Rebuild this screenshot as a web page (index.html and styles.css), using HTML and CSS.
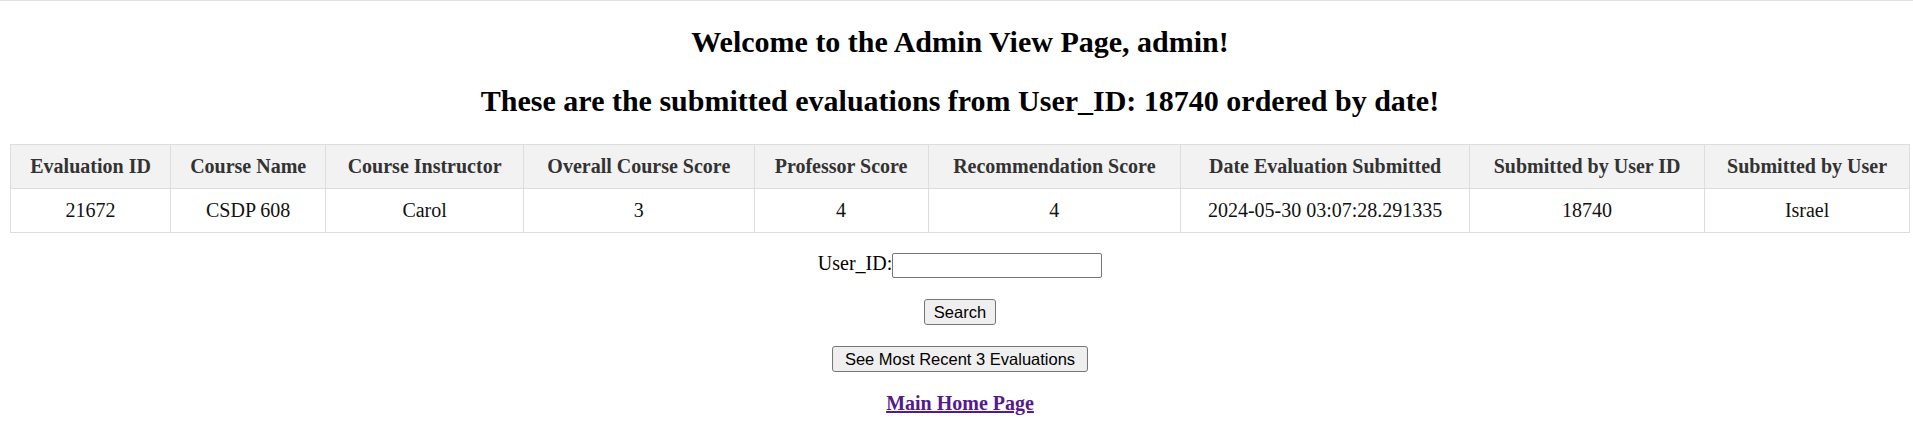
FILE: index.html
```html
<!DOCTYPE html>
<html lang="en">
<head>
<meta charset="utf-8">
<title>Admin View Page</title>
<link rel="stylesheet" href="styles.css">
</head>
<body>
<div class="page">
  <h2 class="title">Welcome to the Admin View Page, admin!</h2>
  <h2 class="title">These are the submitted evaluations from User_ID: 18740 ordered by date!</h2>
  <table class="evals">
    <thead>
      <tr>
        <th>Evaluation ID</th>
        <th>Course Name</th>
        <th>Course Instructor</th>
        <th>Overall Course Score</th>
        <th>Professor Score</th>
        <th>Recommendation Score</th>
        <th>Date Evaluation Submitted</th>
        <th>Submitted by User ID</th>
        <th>Submitted by User</th>
      </tr>
    </thead>
    <tbody>
      <tr>
        <td>21672</td>
        <td>CSDP 608</td>
        <td>Carol</td>
        <td>3</td>
        <td>4</td>
        <td>4</td>
        <td>2024-05-30 03:07:28.291335</td>
        <td>18740</td>
        <td>Israel</td>
      </tr>
    </tbody>
  </table>
  <form class="search-form">
    <div class="field-row">
      <label class="field-label" for="uid">User_ID:</label><input class="field-input" id="uid" type="text">
    </div>
    <div class="btn-row"><button class="btn" type="button">Search</button></div>
  </form>
  <div class="btn-row recent-row"><button class="btn" type="button">See Most Recent 3 Evaluations</button></div>
  <div class="link-row"><a class="home-link" href="#">Main Home Page</a></div>
</div>
</body>
</html>
```
FILE: styles.css
```css
html {
  border-top: 1px solid #e2e2e2;
  background: #fff;
}
body {
  margin: 0;
  padding: 0 3px 0 10px;
  font-family: "Liberation Serif", "Times New Roman", serif;
  font-size: 20px;
  color: #000;
}
.page {
  display: flow-root;
  text-align: center;
}
.title {
  font-size: 30px;
  font-weight: bold;
  margin: 24px 0 25px;
  line-height: 34px;
}
.title + .title {
  margin-top: 0;
  margin-bottom: 26px;
}
.evals {
  width: 100%;
  border-collapse: collapse;
}
.evals th,
.evals td {
  border: 1px solid #dddddd;
  padding: 10px;
  text-align: center;
  font-size: 20px;
  line-height: 23px;
}
.evals th {
  background: #f2f2f2;
  color: #333;
  font-weight: bold;
}
.evals td {
  color: #111;
}
.search-form {
  margin: 0;
}
.field-row {
  margin-top: 20px;
  display: flex;
  justify-content: center;
  align-items: center;
  height: 25px;
}
.field-label {
  font-size: 20px;
  margin-top: -4px;
}
.field-input {
  width: 210px;
  height: 25px;
  box-sizing: border-box;
  border: 1px solid #767676;
  border-radius: 2px;
  padding: 1px 2px;
  margin: 0;
  font-size: 16px;
}
.btn-row {
  display: flex;
  justify-content: center;
  margin-top: 21px;
}
.recent-row {
  margin-top: 21px;
}
.btn {
  font-family: "Liberation Sans", Arial, sans-serif;
  font-size: 16.5px;
  color: #000;
  background: #efefef;
  border: 1px solid #767676;
  border-radius: 3px;
  padding: 2px 9px;
  height: 26px;
  line-height: 20px;
  margin: 0;
}
.btn-row .btn {
  min-width: 72px;
}
.recent-row .btn {
  width: 256px;
}
.link-row {
  margin-top: 20px;
}
.home-link {
  font-weight: bold;
  font-size: 20px;
  color: #551a8b;
  text-decoration: underline;
}
```
